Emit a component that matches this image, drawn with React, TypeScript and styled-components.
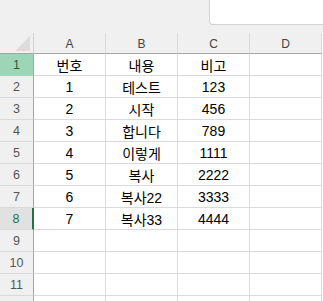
import React from 'react'
import styled, { createGlobalStyle } from 'styled-components'

const GlobalStyle = createGlobalStyle`
  html, body {
    margin: 0;
    padding: 0;
    background: #f0f0f0;
    overflow: hidden;
  }
  body {
    font-family: "Liberation Sans", "Noto Sans CJK KR", sans-serif;
  }
`

const Page = styled.div`
  width: 323px;
  height: 301px;
  display: flex;
  flex-direction: column;
  overflow: hidden;
`

const TopBar = styled.div`
  height: 33px;
  display: flex;
  justify-content: flex-end;
  background: #f0f0f0;
  flex-shrink: 0;
`

const NameBox = styled.div`
  width: 114px;
  height: 25px;
  background: #ffffff;
  border-left: 1px solid #d4d4d4;
  border-bottom: 1px solid #d4d4d4;
  border-bottom-left-radius: 4px;
  box-sizing: border-box;
`

const Sheet = styled.div`
  display: grid;
  grid-template-columns: 34px repeat(4, 72px);
  grid-auto-rows: 22px;
  grid-template-rows: 21px;
  background: #ffffff;
`

const Corner = styled.div`
  background: #f0f0f0;
  border-right: 1px solid #d2d2d2;
  border-bottom: 1px solid #a6a6a6;
  box-sizing: border-box;
  display: flex;
  align-items: flex-end;
  justify-content: flex-end;
  padding: 0 3px 2px 0;
`

const Triangle = styled.div`
  width: 0;
  height: 0;
  border-left: 15px solid transparent;
  border-bottom: 15px solid #dcdcdc;
`

const ColHead = styled.div`
  background: #f0f0f0;
  border-right: 1px solid #d9d9d9;
  border-bottom: 1px solid #a6a6a6;
  box-sizing: border-box;
  display: flex;
  align-items: center;
  justify-content: center;
  font-size: 12px;
  color: #444444;
  padding-top: 1px;
`

const RowHead = styled.div<{ $state?: 'active' | 'current' }>`
  background: ${p => (p.$state === 'active' ? '#9fd5b7' : p.$state === 'current' ? '#e1e1e1' : '#f0f0f0')};
  border-right: ${p => (p.$state === 'current' ? '2px solid #217346' : '1px solid #a6a6a6')};
  border-bottom: 1px solid ${p => (p.$state === 'active' ? '#9fd5b7' : '#d9d9d9')};
  box-sizing: border-box;
  display: flex;
  align-items: center;
  justify-content: center;
  font-size: 12.5px;
  color: ${p => (p.$state === 'active' ? '#1e5e3a' : p.$state === 'current' ? '#217346' : '#555555')};
`

const Cell = styled.div`
  border-right: 1px solid #dadada;
  border-bottom: 1px solid #dadada;
  box-sizing: border-box;
  display: flex;
  align-items: center;
  justify-content: center;
  font-size: 14px;
  color: #000000;
  white-space: nowrap;
  overflow: hidden;
`

const columns = ['A', 'B', 'C', 'D']

const rows: string[][] = [
  ['번호', '내용', '비고', ''],
  ['1', '테스트', '123', ''],
  ['2', '시작', '456', ''],
  ['3', '합니다', '789', ''],
  ['4', '이렇게', '1111', ''],
  ['5', '복사', '2222', ''],
  ['6', '복사22', '3333', ''],
  ['7', '복사33', '4444', ''],
  ['', '', '', ''],
  ['', '', '', ''],
  ['', '', '', ''],
  ['', '', '', ''],
]

// only the first 11 row numbers are visible in the window
const VISIBLE_LABELS = 11

export default function App() {
  return (
    <Page>
      <GlobalStyle />
      <TopBar>
        <NameBox />
      </TopBar>
      <Sheet>
        <Corner>
          <Triangle />
        </Corner>
        {columns.map(c => (
          <ColHead key={c}>{c}</ColHead>
        ))}
        {rows.map((r, i) => (
          <React.Fragment key={i}>
            <RowHead $state={i === 0 ? 'active' : i === 7 ? 'current' : undefined}>
              {i < VISIBLE_LABELS ? i + 1 : ''}
            </RowHead>
            {r.map((v, j) => (
              <Cell key={j}>{v}</Cell>
            ))}
          </React.Fragment>
        ))}
      </Sheet>
    </Page>
  )
}
